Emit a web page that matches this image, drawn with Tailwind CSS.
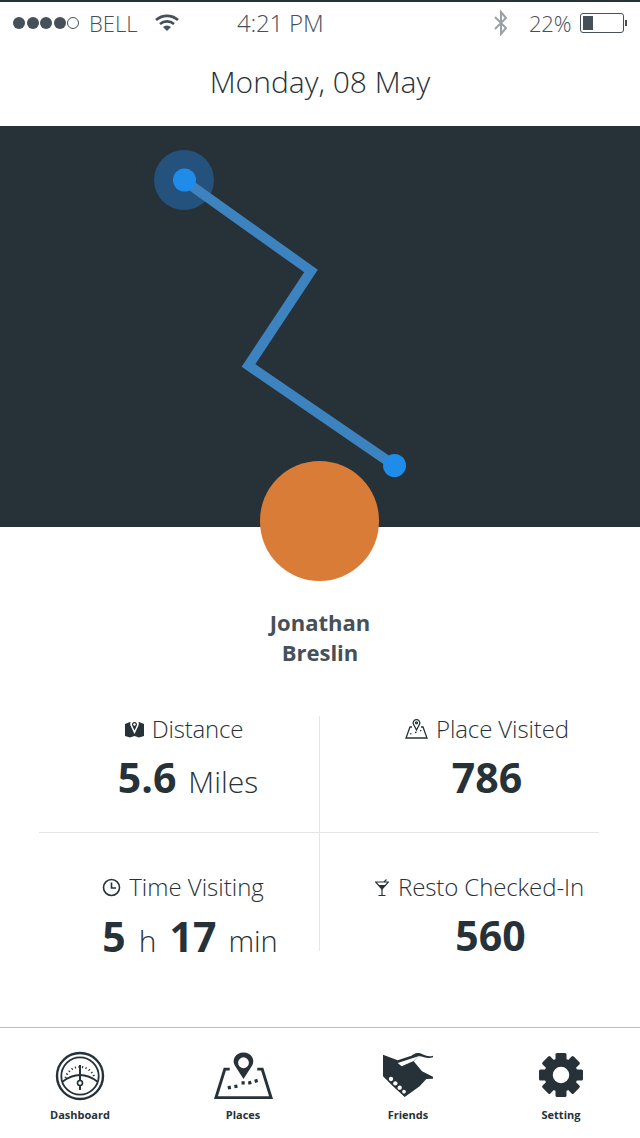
<!DOCTYPE html>
<html lang="en">
<head>
  <meta charset="UTF-8" />
  <meta name="viewport" content="width=device-width, initial-scale=1.0" />
  <title>Dashboard</title>
  <script src="https://cdn.jsdelivr.net/npm/@tailwindcss/browser@4"></script>
</head>
<body class="bg-white font-['Open_Sans',sans-serif] text-[#263238]">
<div class="w-[640px] h-[1138px] overflow-hidden flex flex-col">

  <!-- Status bar -->
  <div class="h-[44px] border-t-2 border-[#263238] flex items-center pl-[13px] text-[#455058] font-light shrink-0">
    <div class="flex items-center gap-[1.6px] w-[67px]">
      <span class="w-[12px] h-[12px] rounded-full bg-[#455058]"></span>
      <span class="w-[12px] h-[12px] rounded-full bg-[#455058]"></span>
      <span class="w-[12px] h-[12px] rounded-full bg-[#455058]"></span>
      <span class="w-[12px] h-[12px] rounded-full bg-[#455058]"></span>
      <span class="w-[12px] h-[12px] rounded-full border border-[#455058]"></span>
    </div>
    <span class="w-[66px] text-[22px] ml-[9px]">BELL</span>
    <svg class="w-[24px] h-[18px]" viewBox="0 0 24 18" fill="none" stroke="#455058" stroke-width="2.6">
      <path d="M1 6 C7.500 0.500 16.500 0.500 23 6" />
      <path d="M5 10 C9 6.500 15 6.500 19 10" />
      <path d="M12 17 L8 13 C10.500 11 13.500 11 16 13 Z" fill="#455058" stroke="none" />
    </svg>
    <span class="w-[255px] ml-[58px] text-[24px] tracking-[-0.2px]">4:21 PM</span>
    <svg class="w-[18px] h-[26px]" viewBox="0 0 18 26" fill="none" stroke="#9aa0a4" stroke-width="2">
      <path d="M3 7 L14 18 L9 24 L9 2 L14 8 L3 19" />
    </svg>
    <span class="ml-[19px] w-[51px] text-[22px] tracking-[-0.2px]">22%</span>
    <div class="flex items-center">
      <div class="w-[44px] h-[20px] rounded-[3px] border border-[#455058] p-[2px]">
        <div class="w-[10px] h-full bg-[#455058]"></div>
      </div>
      <span class="w-[2px] h-[6px] bg-[#455058] ml-[1px]"></span>
    </div>
  </div>

  <!-- Date -->
  <div class="h-[82px] flex items-center justify-center text-[30px] font-light text-[#263238] shrink-0 pb-[7px]">Monday, 08 May</div>

  <!-- Route map -->
  <div class="relative h-[401px] bg-[#263238] shrink-0">
    <svg class="absolute inset-0" width="640" height="401" viewBox="0 126 640 401">
      <circle cx="184" cy="180" r="30" fill="#24527c" />
      <path d="M184 180.500 L311 271 L248.500 365.500 L394.500 465.500" fill="none" stroke="#3d83bf" stroke-width="10" />
      <circle cx="184.500" cy="180" r="11.500" fill="#1e8ce8" />
      <circle cx="394.500" cy="465.500" r="11.500" fill="#1e8ce8" />
    </svg>
    <div class="absolute left-[260px] top-[335px] w-[119px] h-[120px] rounded-full bg-[#d87c38]"></div>
  </div>

  <!-- Name -->
  <div class="pt-[80px] text-center text-[22px] leading-[30px] font-bold text-[#455058] shrink-0">Jonathan<br />Breslin</div>

  <!-- Stats -->
  <div class="mx-[39px] mt-[49px] w-[560px] h-[235px] grid grid-cols-[281px_279px] grid-rows-[117px_118px] shrink-0">
    <div class="border-r border-b border-[#e3e5e6] flex flex-col items-center">
      <div class="flex items-center gap-[8px] text-[24px] font-light text-[#263238] h-[28px] mt-[-1px] pl-[10px] tracking-[-0.2px]">
        <svg class="w-[19px] h-[18px]" viewBox="0 0 19 18" fill="#263238">
          <path d="M0 4 L5 2 L9.500 4 L14 2 L19 4 V16 L14 17.500 L9.500 16 L5 17.500 L0 16 Z" />
          <path d="M9.500 0 C13 0 14.500 3 13.500 5.500 L9.500 14 L5.500 5.500 C4.500 3 6 0 9.500 0 Z" fill="#fff" />
          <path d="M9.500 2 C11.500 2 12.500 4 11.800 5.500 L9.500 10.500 L7.200 5.500 C6.500 4 7.500 2 9.500 2 Z" fill="#263238" />
          <circle cx="9.500" cy="4.500" r="1.200" fill="#fff" />
        </svg>
        <span>Distance</span>
      </div>
      <div class="flex items-baseline mt-[7px] text-[41px] leading-[54px] font-bold pl-[18px]"><span>5.6</span><span class="ml-[12px] text-[30px] font-light text-[#263238]">Miles</span></div>
    </div>
    <div class="border-b border-[#e3e5e6] flex flex-col items-center">
      <div class="flex items-center gap-[8px] text-[24px] font-light text-[#263238] h-[28px] mt-[-1px] pl-[55px] tracking-[-0.1px]">
        <svg class="w-[23px] h-[20px]" viewBox="0 0 23 20" fill="none" stroke="#263238" stroke-width="1.300">
          <path d="M7 8 H5 L1 19 H22 L18 8 H16" />
          <path d="M11.500 11 L8.600 5.500 A3.300 3.300 0 1 1 14.400 5.500 Z" />
          <circle cx="11.500" cy="3.800" r="1" />
          <path d="M5 15 L8 14 M10 13.500 L13 13 M15 12 L17 11" stroke-dasharray="1.500 1.500" />
        </svg>
        <span>Place Visited</span>
      </div>
      <div class="mt-[7px] text-[41px] leading-[54px] font-bold pl-[55px]">786</div>
    </div>
    <div class="border-r border-[#e3e5e6] flex flex-col items-center pt-[40px]">
      <div class="flex items-center gap-[8px] text-[24px] font-light text-[#263238] h-[28px] pl-[8px]">
        <svg class="w-[19px] h-[19px]" viewBox="0 0 19 19" fill="none" stroke="#263238" stroke-width="1.600">
          <circle cx="9.500" cy="9.500" r="8" />
          <path d="M9.500 4.500 V10 H14" />
        </svg>
        <span>Time Visiting</span>
      </div>
      <div class="flex items-baseline mt-[8px] text-[41px] leading-[54px] font-bold pl-[22px]">
        <span>5</span><span class="ml-[13px] text-[30px] font-light text-[#263238]">h</span><span class="ml-[13px]">17</span><span class="ml-[12px] text-[29px] font-light text-[#263238]">min</span>
      </div>
    </div>
    <div class="flex flex-col items-center pt-[40px]">
      <div class="flex items-center gap-[9px] text-[24px] font-light text-[#263238] h-[28px] pl-[40px] tracking-[-0.1px]">
        <svg class="w-[14px] h-[17px]" viewBox="0 0 14 17" fill="none" stroke="#263238" stroke-width="1.200">
          <path d="M0.500 3 H13.500 L7 10 Z" />
          <path d="M3 6 H11 L7 10 Z" fill="#263238" stroke="none" />
          <path d="M7 10 V16 M3.500 16.500 H10.500 M9 3 L11.500 0.500" />
        </svg>
        <span>Resto Checked-In</span>
      </div>
      <div class="mt-[7px] text-[41px] leading-[54px] font-bold pl-[62px]">560</div>
    </div>
  </div>

  <!-- Tab bar -->
  <div class="mt-[76px] h-[111px] border-t border-[#bdbdbd] shrink-0 grid grid-cols-4 text-[11px] font-bold text-[#263238]">
    <div class="flex flex-col items-center pt-[23px]">
      <svg class="w-[50px] h-[50px]" viewBox="0 0 50 50" fill="none" stroke="#263238">
        <circle cx="25" cy="25" r="23" stroke-width="2.400" />
        <circle cx="25" cy="25" r="18.700" stroke-width="1.800" />
        <path d="M10.500 27 A15 15 0 0 1 39.500 27" stroke-width="2" stroke-dasharray="1.200 2.400" />
        <path d="M7 31 Q25 17 43 31" stroke-width="1.800" />
        <path d="M25 14 V29 M25 35 V39" stroke-width="2" />
        <circle cx="25" cy="32" r="2.500" stroke-width="1.600" />
      </svg>
      <span class="mt-[6px] leading-[16px]">Dashboard</span>
    </div>
    <div class="flex flex-col items-center pt-[23px] ml-[3px] mr-[-3px]">
      <svg class="w-[59px] h-[50px]" viewBox="0 0 60 50" fill="none" stroke="#263238">
        <path d="M16 18 H11 L2 47 H58 L49 18 H44" stroke-width="3" />
        <path fill-rule="evenodd" fill="#263238" stroke="none" d="M30 1 C38 1 42 8 39 14 L30 28 L21 14 C18 8 22 1 30 1 Z M30 6 A5.500 5.500 0 1 0 30 17 A5.500 5.500 0 1 0 30 6 Z" />
        <path d="M14 37 L25 35 M28 32 L36 32 L46 29" stroke-width="3.400" stroke-dasharray="3.200 3.600" />
      </svg>
      <span class="mt-[6px] leading-[16px]">Places</span>
    </div>
    <div class="flex flex-col items-center pt-[25px] ml-[8px] mr-[-8px]">
      <svg class="w-[50px] h-[44px]" viewBox="0 0 150 132" fill="#263238">
        <path d="M0 5 L44 22 L85 8 C92 3 100 -1 108 0 C120 2 130 14 150 8 V13 C130 20 120 8 106 10 L92 25 L117 55 L150 71 V77 L130 78 L110 100 L85 118 L65 132 L30 100 L0 70 Z" />
        <path d="M44 30 L106 10 L92 24 L56 40 Z" fill="#fff" />
        <circle cx="24" cy="78" r="6.500" fill="#fff" />
        <circle cx="37" cy="91" r="6.500" fill="#fff" />
        <circle cx="50" cy="104" r="6.500" fill="#fff" />
        <circle cx="63" cy="116" r="5.500" fill="#fff" />
      </svg>
      <span class="mt-[10px] leading-[16px]">Friends</span>
    </div>
    <div class="flex flex-col items-center pt-[25px] ml-[1px] mr-[-1px]">
      <svg class="w-[44px] h-[44px]" viewBox="0 0 44 44" fill="#263238">
        <rect x="16.500" y="0" width="11" height="12" rx="1.500" />
        <rect x="16.500" y="0" width="11" height="12" rx="1.500" transform="rotate(45 22 22)" />
        <rect x="16.500" y="0" width="11" height="12" rx="1.500" transform="rotate(90 22 22)" />
        <rect x="16.500" y="0" width="11" height="12" rx="1.500" transform="rotate(135 22 22)" />
        <rect x="16.500" y="0" width="11" height="12" rx="1.500" transform="rotate(180 22 22)" />
        <rect x="16.500" y="0" width="11" height="12" rx="1.500" transform="rotate(225 22 22)" />
        <rect x="16.500" y="0" width="11" height="12" rx="1.500" transform="rotate(270 22 22)" />
        <rect x="16.500" y="0" width="11" height="12" rx="1.500" transform="rotate(315 22 22)" />
        <circle cx="22" cy="22" r="12.500" fill="none" stroke="#263238" stroke-width="8.500" />
      </svg>
      <span class="mt-[10px] leading-[16px]">Setting</span>
    </div>
  </div>
</div>
</body>
</html>
